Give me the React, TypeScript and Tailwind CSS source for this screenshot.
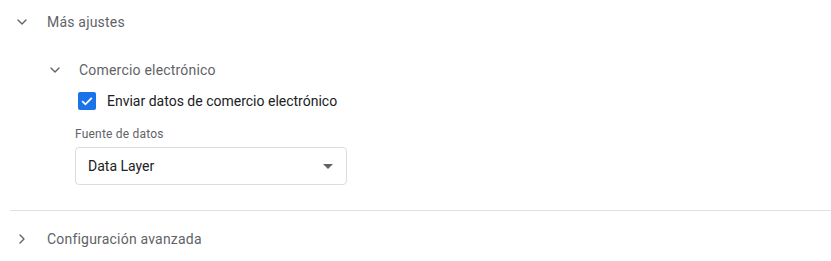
import { ChevronDown, ChevronRight } from "lucide-react";

function Checkbox() {
  return (
    <span className="w-[18px] h-[18px] rounded-[2px] bg-[#1a73e8] flex items-center justify-center shrink-0">
      <svg viewBox="0 0 18 18" className="w-[18px] h-[18px]">
        <path d="M4.2 9.2 7.4 12.3 13.8 5.8" fill="none" stroke="#fff" strokeWidth="1.8" />
      </svg>
    </span>
  );
}

export default function App() {
  return (
    <div className="w-full h-[261px] bg-white font-['Roboto',sans-serif] text-[#5f6368] overflow-hidden">
      <div className="pl-[10px]">
        {/* Más ajustes */}
        <div className="h-[44px] flex items-center pl-[4px]">
          <ChevronDown className="w-4 h-4 text-[#5f6368]" strokeWidth={2} />
          <span className="ml-[17px] text-[14px] tracking-[0.2px]">Más ajustes</span>
        </div>

        <div className="mt-[4px] pl-[37px]">
          {/* Comercio electrónico */}
          <div className="h-[44px] flex items-center">
            <ChevronDown className="w-4 h-4 text-[#5f6368]" strokeWidth={2} />
            <span className="ml-[16px] text-[14px] tracking-[0.2px]">Comercio electrónico</span>
          </div>

          <div className="pl-[28px]">
            <label className="h-[18px] flex items-center pl-[3px]">
              <Checkbox />
              <span className="ml-[11px] text-[14px] text-[#202124]">
                Enviar datos de comercio electrónico
              </span>
            </label>

            <div className="mt-[16px] text-[12px] leading-4 tracking-[0.2px] text-[#5f6368]">
              Fuente de datos
            </div>

            <div className="mt-[5px] w-[272px] h-[38px] border border-[#dadce0] rounded-[4px] flex items-center justify-between pl-[12px] pr-[13px]">
              <span className="text-[14px] text-[#202124]">Data Layer</span>
              <span className="w-0 h-0 border-l-[5px] border-r-[5px] border-t-[5px] border-l-transparent border-r-transparent border-t-[#5f6368]" />
            </div>
          </div>
        </div>

        <div className="mt-[25px] border-t border-[#e0e0e0]" />

        {/* Configuración avanzada */}
        <div className="h-[56px] flex items-center pl-[4px]">
          <ChevronRight className="w-4 h-4 text-[#5f6368]" strokeWidth={2} />
          <span className="ml-[17px] text-[14px] tracking-[0.2px]">Configuración avanzada</span>
        </div>
      </div>
    </div>
  );
}
